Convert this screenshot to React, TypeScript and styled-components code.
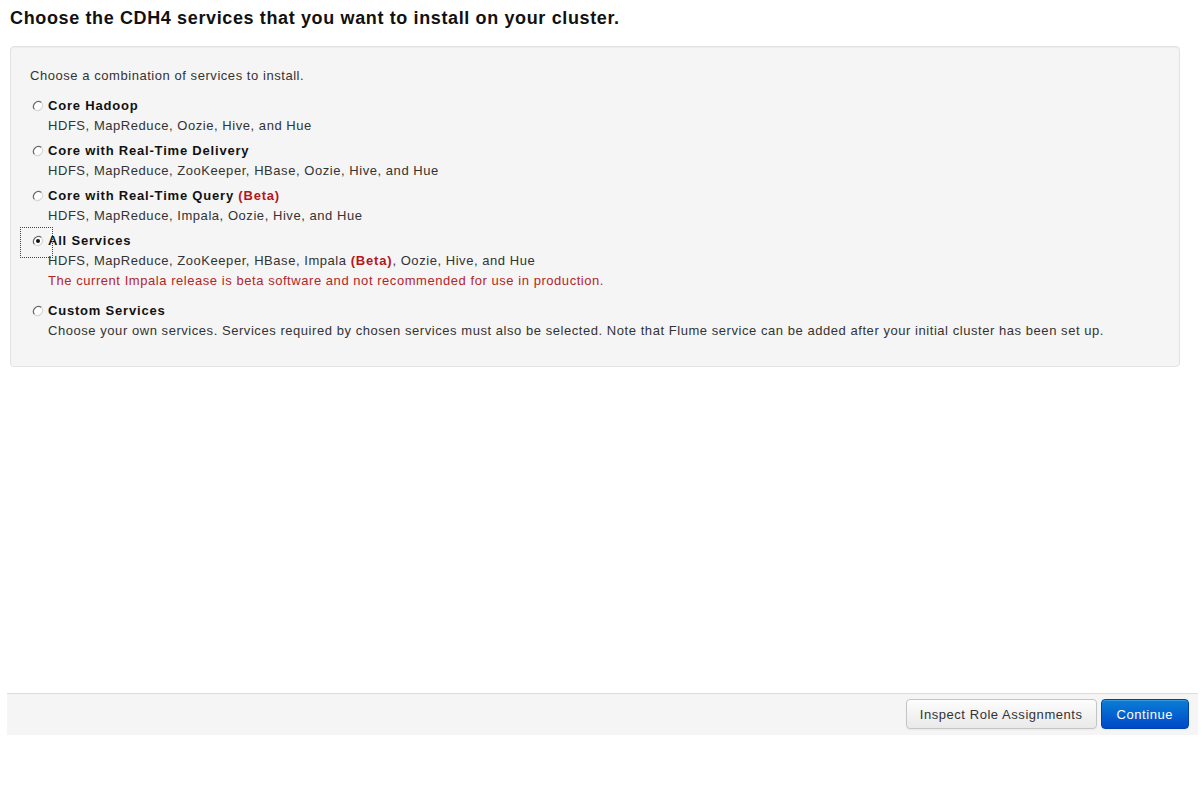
import * as React from "react";
import styled, { createGlobalStyle } from "styled-components";

const GlobalStyle = createGlobalStyle`
    html, body {
        margin: 0;
        padding: 0;
        background: #fff;
        font-family: "Liberation Sans", Arial, sans-serif;
    }
`

const Page = styled.div`
    width: 1203px;
    height: 786px;
    display: flex;
    flex-direction: column;
`

const Title = styled.h1`
    margin: 8px 0 0 10px;
    font-size: 18px;
    line-height: 20px;
    font-weight: bold;
    letter-spacing: 0.63px;
    color: #111;
`

const Well = styled.div`
    margin: 18px 0 0 10px;
    width: 1170px;
    box-sizing: border-box;
    padding: 19px 19px 25px 19px;
    background: #f5f5f5;
    border: 1px solid #e3e3e3;
    border-radius: 4px;
    box-shadow: inset 0 1px 1px rgba(0, 0, 0, 0.04);
    font-size: 13px;
    line-height: 20px;
    letter-spacing: 0.55px;
    color: #333;
`

const Intro = styled.p`
    margin: 0 0 10px 0;
`

const OptionList = styled.div`
    display: flex;
    flex-direction: column;
    gap: 5px;
`

const Option = styled.div<{ $extraTop?: boolean }>`
    display: grid;
    grid-template-columns: 18px 1fr;
    margin-top: ${p => (p.$extraTop ? "5px" : "0")};
`

const RadioCell = styled.div`
    position: relative;
    display: flex;
    align-items: center;
    height: 20px;
    padding-left: 2px;
`

const FocusRing = styled.span`
    position: absolute;
    left: -10px;
    top: -4px;
    width: 33px;
    height: 31px;
    border: 1px dotted #444;
    box-sizing: border-box;
    pointer-events: none;
`

const Label = styled.div`
    font-weight: bold;
    letter-spacing: 0.8px;
    color: #111;
`

const Desc = styled.div`
    grid-column: 2;
`

const Beta = styled.span`
    font-weight: bold;
    letter-spacing: 0.8px;
    color: #b4161b;
`

const Warning = styled.div`
    grid-column: 2;
    color: #b4242a;
`

const Footer = styled.div`
    margin: auto 0 51px 7px;
    width: 1191px;
    height: 42px;
    box-sizing: border-box;
    background: #f5f5f5;
    border-top: 1px solid #ddd;
    display: flex;
    justify-content: flex-end;
    align-items: center;
    gap: 4px;
    padding: 0 9px 1px 0;
`

const Button = styled.button<{ $primary?: boolean }>`
    height: 30px;
    padding: 0 ${p => (p.$primary ? "15px" : "13px")};
    font-family: "Liberation Sans", Arial, sans-serif;
    font-size: 13px;
    letter-spacing: 0.55px;
    border-radius: 4px;
    cursor: pointer;
    color: ${p => (p.$primary ? "#fff" : "#333")};
    border: 1px solid ${p => (p.$primary ? "#0044aa" : "#c5c5c5")};
    background: ${p =>
        p.$primary
            ? "linear-gradient(#0a7fd6, #0047c8)"
            : "linear-gradient(#fdfdfd, #e9e9e9)"};
    box-shadow: inset 0 1px 0 rgba(255, 255, 255, 0.2), 0 1px 2px rgba(0, 0, 0, 0.05);
`

const Radio = ({ checked }: { checked?: boolean }) => (
    <svg width="12" height="12" viewBox="0 0 12 12">
        <circle cx="6" cy="6" r="5" fill="#fff" />
        <path d="M2.5 9.5 A5 5 0 0 1 9.5 2.5" stroke="#6a6a6a" strokeWidth="1.2" fill="none" />
        <path d="M9.5 2.5 A5 5 0 0 1 2.5 9.5" stroke="#d8d8d8" strokeWidth="1.2" fill="none" />
        {checked && <circle cx="6" cy="6" r="2" fill="#111" />}
    </svg>
)

type ServiceOption = {
    label: React.ReactNode
    desc: React.ReactNode
    warning?: string
    checked?: boolean
}

const options: ServiceOption[] = [
    { label: "Core Hadoop", desc: "HDFS, MapReduce, Oozie, Hive, and Hue" },
    {
        label: "Core with Real-Time Delivery",
        desc: "HDFS, MapReduce, ZooKeeper, HBase, Oozie, Hive, and Hue",
    },
    {
        label: <>Core with Real-Time Query <Beta>(Beta)</Beta></>,
        desc: "HDFS, MapReduce, Impala, Oozie, Hive, and Hue",
    },
    {
        label: "All Services",
        desc: <>HDFS, MapReduce, ZooKeeper, HBase, Impala <Beta>(Beta)</Beta>, Oozie, Hive, and Hue</>,
        warning: "The current Impala release is beta software and not recommended for use in production.",
        checked: true,
    },
    {
        label: "Custom Services",
        desc: "Choose your own services. Services required by chosen services must also be selected. Note that Flume service can be added after your initial cluster has been set up.",
    },
]

const App = () => {
    return (
        <Page>
            <GlobalStyle/>
            <Title>Choose the CDH4 services that you want to install on your cluster.</Title>
            <Well>
                <Intro>Choose a combination of services to install.</Intro>
                <OptionList>
                    {options.map((o, i) => (
                        <Option key={i} $extraTop={i > 0 && !!options[i - 1].warning}>
                            <RadioCell>
                                <Radio checked={o.checked}/>
                                {o.checked && <FocusRing/>}
                            </RadioCell>
                            <Label>{o.label}</Label>
                            <Desc>{o.desc}</Desc>
                            {o.warning && <Warning>{o.warning}</Warning>}
                        </Option>
                    ))}
                </OptionList>
            </Well>
            <Footer>
                <Button>Inspect Role Assignments</Button>
                <Button $primary>Continue</Button>
            </Footer>
        </Page>
    )
}

export default App
